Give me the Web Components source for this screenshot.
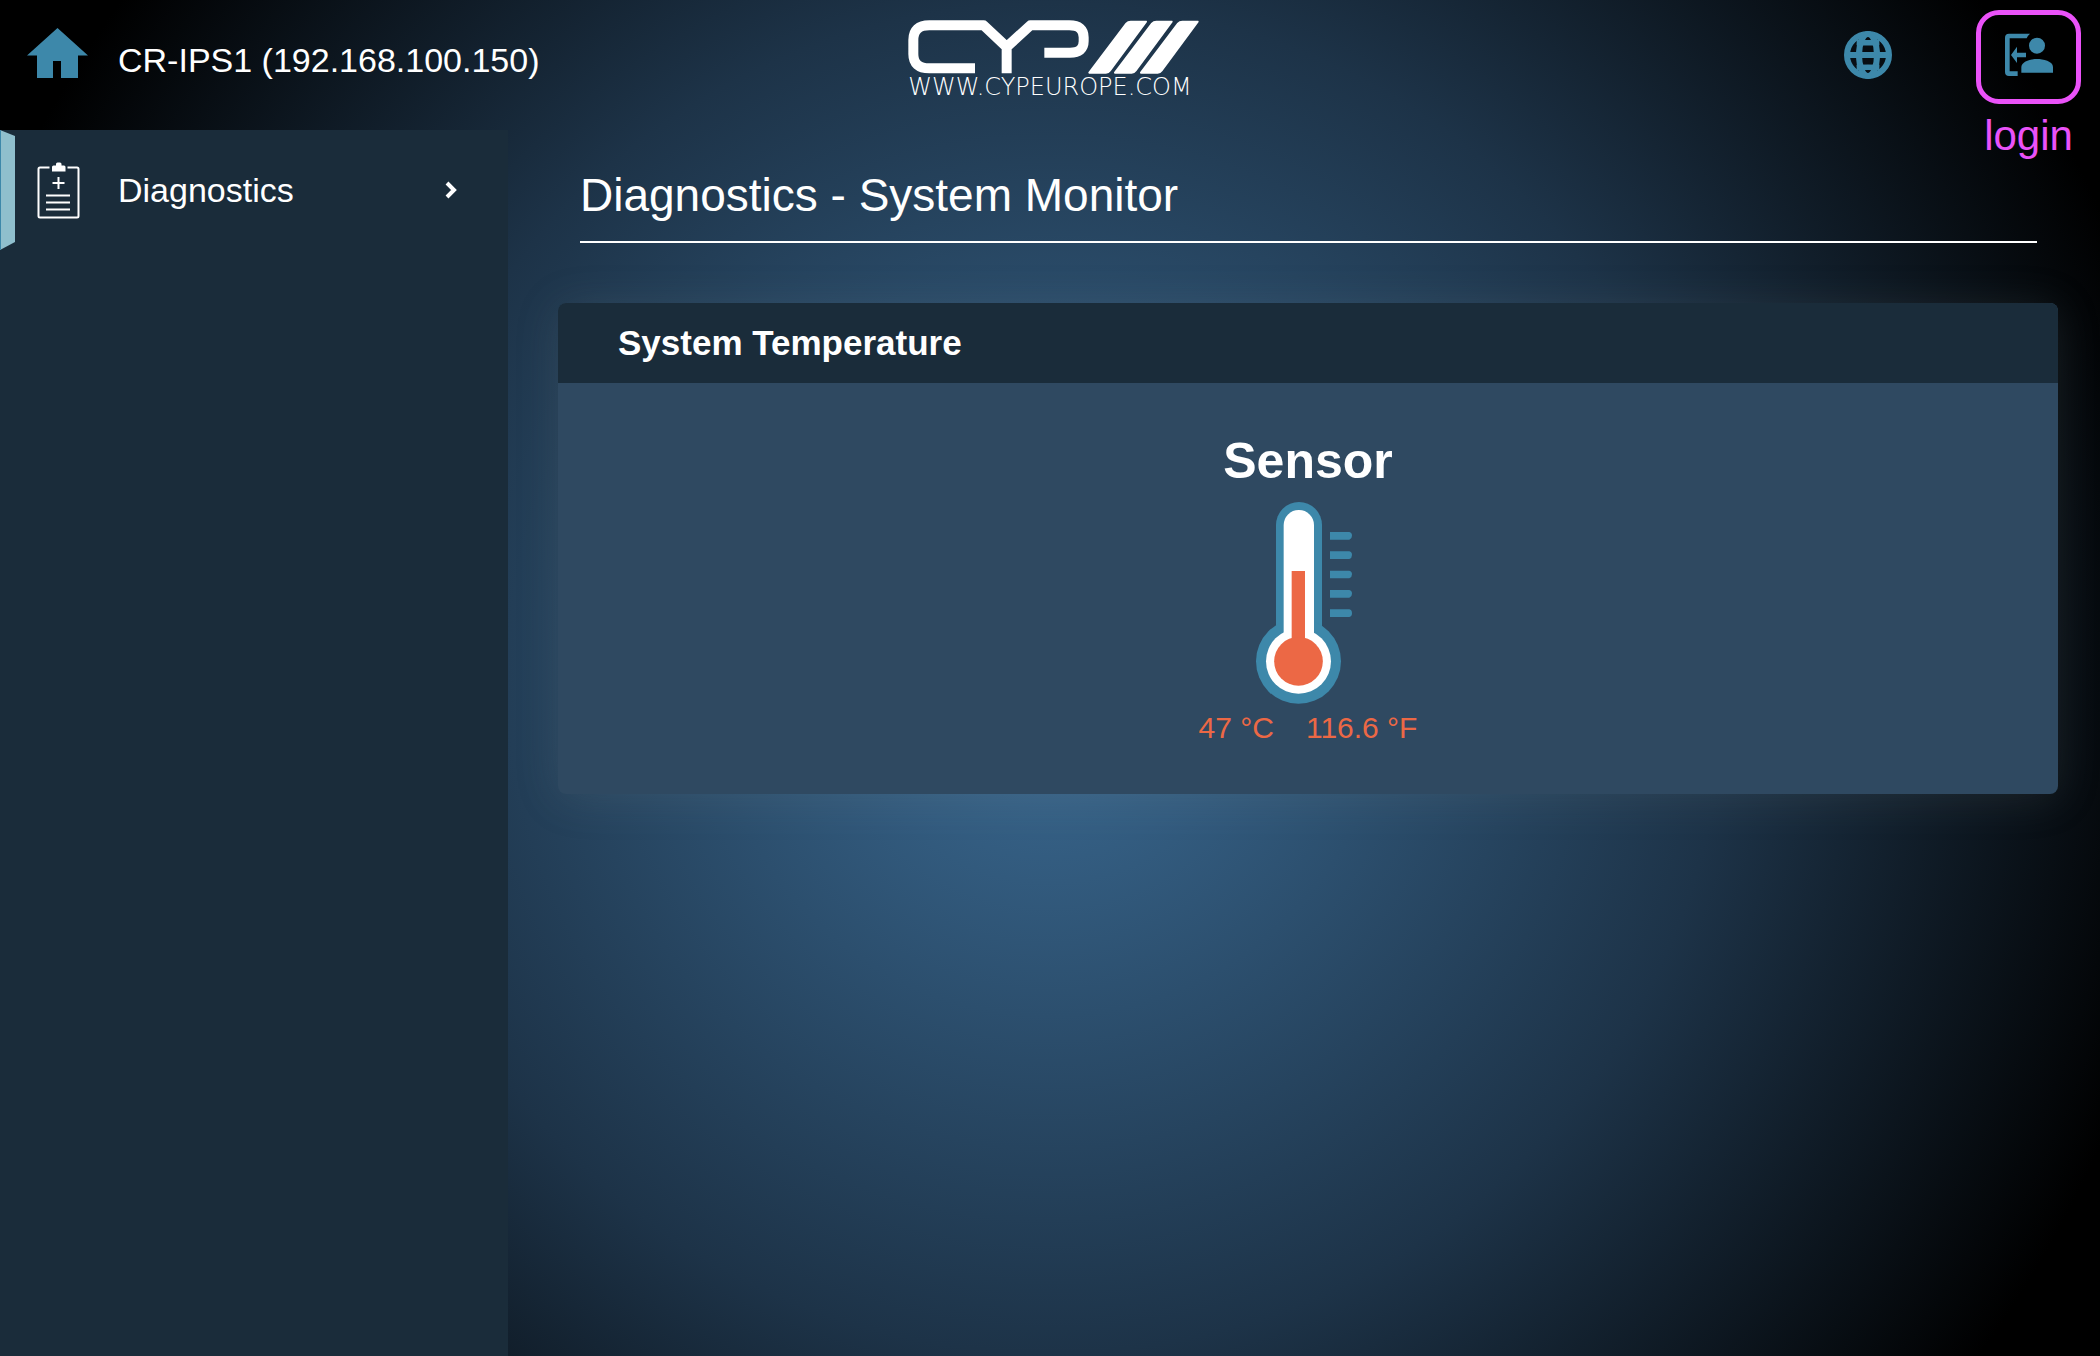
<!DOCTYPE html>
<html lang="en">
<head>
<meta charset="utf-8">
<meta name="viewport" content="width=device-width, initial-scale=1">
<title>CR-IPS1 - System Monitor</title>
<style>
  html, body { margin: 0; height: 100%; }
  body {
    --accent: #3d88aa;
    --panel: #1a2c3a;
    --surface: #2f4961;
    --hot: #ec6845;
    --mark: #ea52f8;
    font-family: "Liberation Sans", Arial, sans-serif;
    font-size: 34px;
    color: #fff;
  }
</style>
</head>
<body>
<app-shell>
  <app-header slot="header" device="CR-IPS1 (192.168.100.150)"></app-header>
  <side-nav slot="nav"><nav-item href="#diagnostics">Diagnostics</nav-item></side-nav>
  <page-title>Diagnostics - System Monitor</page-title>
  <info-card>
    <span slot="heading">System Temperature</span>
    <temp-sensor celsius="47" fahrenheit="116.6">Sensor</temp-sensor>
  </info-card>
</app-shell>

<script>
  const define = (name, html) => customElements.define(name, class extends HTMLElement {
    constructor() {
      super();
      const t = document.createElement('template');
      t.innerHTML = html;
      this.attachShadow({ mode: 'open' }).append(t.content.cloneNode(true));
    }
    connectedCallback() {
      this.shadowRoot.querySelectorAll('[data-attr]').forEach(n => {
        n.textContent = this.getAttribute(n.dataset.attr);
      });
      const link = this.shadowRoot.querySelector('a[data-link]');
      if (link) link.href = this.getAttribute('href');
    }
  });

  define('app-shell', `
    <style>
      :host { display: flex; flex-direction: column; min-height: 100vh;
        background: radial-gradient(circle at center, #3b6b94 0%, #1d3348 54%, #000 92%); }
      .body { flex: 1; display: flex; }
      main { flex: 1; min-width: 0; padding: 39px 42px 60px 50px; box-sizing: border-box; }
    </style>
    <slot name="header"></slot>
    <div class="body"><slot name="nav"></slot><main><slot></slot></main></div>`);

  define('app-header', `
    <style>
      :host { display: block; }
      header { display: grid; grid-template-columns: 1fr auto 1fr; height: 130px; }
      svg { display: block; }
      .brand { display: flex; align-items: flex-end; gap: 30px; height: 50px; padding: 28px 0 0 27px; line-height: 36px; white-space: nowrap; }
      .actions { display: flex; justify-content: flex-end; align-items: flex-start; gap: 84px; padding: 10px 19px 0 0; }
      button { margin: 0; padding: 0; border: 0; background: none; font: inherit; color: inherit; cursor: pointer; }
      .lang { padding-top: 21px; }
    </style>
    <header>
      <div class="brand">
        <a href="#home" aria-label="Home"><svg width="61" height="50" viewBox="27 28 61 50" fill="var(--accent)"><path d="M57.5 28 88 55.5H78V78H61V61H53V78H37V55.5H27Z"/></svg></a>
        <span data-attr="device"></span>
      </div>
      <cyp-logo></cyp-logo>
      <div class="actions">
        <button class="lang" aria-label="Language"><svg width="48" height="48" viewBox="132 93 144 144" fill="none" stroke="var(--accent)">
          <circle cx="204" cy="165" r="63" stroke-width="18"/>
          <ellipse cx="204" cy="165" rx="27" ry="63" stroke-width="18"/>
          <path stroke-width="18" d="M140 165H268"/>
          <path stroke-width="17" d="M170 127.500Q204 129 238 127.500M170 202.500Q204 201 238 202.500"/>
        </svg></button>
        <login-button>login</login-button>
      </div>
    </header>`);

  define('cyp-logo', `
    <style>
      :host { display: flex; flex-direction: column; align-items: center; padding-top: 20px; }
      svg { display: block; }
      span { font-family: "DejaVu Sans", sans-serif; font-weight: 200; font-size: 24px; line-height: 24px; padding-top: 1px; }
    </style>
    <svg width="300" height="54" viewBox="30 60 900 162" role="img" aria-label="CYP" fill="none" stroke="#fff" stroke-width="30" stroke-linejoin="round">
      <path d="M255 205H118Q70 205 70 162V120Q70 76 118 76H281L350 141L421 76H538Q581 76 581 112V124Q581 158 540 158H463M350 142V220"/>
      <g fill="#fff" stroke-width="6"><path d="M598 218H648Q655 218 660 211L768 65H722Q714 65 709 71Z"/><path d="M675 218H725Q732 218 737 211L845 65H799Q791 65 786 71Z"/><path d="M753 218H803Q810 218 815 211L923 65H877Q869 65 864 71Z"/></g>
    </svg>
    <span>WWW.CYPEUROPE.COM</span>`);

  define('login-button', `
    <style>
      :host { display: block; }
      button { display: flex; flex-direction: column; align-items: center; gap: 9px; margin: 0; padding: 0; border: 0; background: none; cursor: pointer; color: var(--mark); font-family: inherit; font-size: 42px; line-height: 46px; }
      .box { display: flex; align-items: center; justify-content: center; width: 105px; height: 94px; box-sizing: border-box; border: 5px solid var(--mark); border-radius: 23px; padding-bottom: 4px; }
      svg { display: block; }
    </style>
    <button>
      <span class="box"><svg width="48" height="44" viewBox="612 99 144 132" fill="var(--accent)">
        <path d="M624 101H687Q680 107 677 115H626V214H650V228H624Q612 228 612 216V113Q612 101 624 101Z"/>
        <path d="M630 165 648 140V158H675V172H648V189Z"/>
        <circle cx="708" cy="137" r="24"/>
        <path d="M661 218V201C661 184 690 177 708 177S756 184 756 201V218Z"/>
      </svg></span>
      <span><slot></slot></span>
    </button>`);

  define('side-nav', `
    <style>:host { display: block; flex: 0 0 508px; background: var(--panel); }</style>
    <nav><slot></slot></nav>`);

  define('nav-item', `
    <style>
      :host { display: block; }
      a { display: flex; align-items: center; height: 120px; color: inherit; text-decoration: none; padding-right: 50px; }
      .tab { align-self: stretch; width: 15px; box-sizing: border-box; background: #8fbfcd; border-left: 1px solid var(--accent); clip-path: polygon(0 0, 100% 6px, 100% 112px, 0 100%); }
      .icon { margin: 0 38px 0 22px; }
      .label { flex: 1; }
      svg { display: block; }
    </style>
    <a data-link>
      <span class="tab"></span>
      <svg class="icon" width="43" height="58" viewBox="37 161 43 58" fill="none" stroke="#fff" stroke-width="2">
        <path d="M49.500 167.500H40Q38.500 167.500 38.500 169V216Q38.500 217.500 40 217.500H77Q78.500 217.500 78.500 216V169Q78.500 167.500 77 167.500H67.500"/>
        <path fill="#fff" stroke="none" d="M52 167Q52 165.500 53.500 165.500H56V164Q56 162.500 57.500 162.500H60Q61.500 162.500 61.500 164V165.500H64Q65.500 165.500 65.500 167V171.500H52Z"/>
        <path d="M58.500 177V189M52.500 183H64.500M46 195.500H70M46 202.500H70M46 209.500H70"/>
      </svg>
      <span class="label"><slot></slot></span>
      <svg width="13" height="18" viewBox="0 0 13 18" fill="none" stroke="#fff" stroke-width="4"><path d="M2 2 9 9 2 16"/></svg>
    </a>`);

  define('page-title', `
    <style>
      :host { display: block; margin: 0 21px 60px 22px; border-bottom: 2px solid #fff; }
      h1 { margin: 0; padding-bottom: 20px; font-size: 46px; line-height: 52px; font-weight: 400; }
    </style>
    <h1><slot></slot></h1>`);

  define('info-card', `
    <style>
      :host { display: block; border-radius: 8px; overflow: hidden; background: var(--surface); box-shadow: 0 4px 44px rgba(120, 128, 128, .17); }
      h2 { margin: 0; padding: 22px 60px; font-size: 35px; line-height: 36px; font-weight: 700; background: var(--panel); }
      .content { padding: 50px 60px; }
    </style>
    <section><h2><slot name="heading"></slot></h2><div class="content"><slot></slot></div></section>`);

  define('temp-sensor', `
    <style>
      :host { display: flex; flex-direction: column; align-items: center; }
      h3 { margin: 0; font-size: 50px; line-height: 56px; font-weight: 700; }
      svg { display: block; margin: 13px 0 8px; }
      .readings { display: flex; gap: 32px; font-size: 30px; line-height: 32px; color: var(--hot); }
    </style>
    <h3><slot></slot></h3>
    <svg width="104" height="202" viewBox="318 246 312 606" aria-hidden="true">
      <g fill="var(--accent)">
        <rect x="378" y="246" width="138" height="500" rx="69"/><circle cx="445.500" cy="724" r="127.500"/>
        <path d="M540 336H598Q606 338 606 347T598 359H540ZM540 394H598Q606 396 606 405T598 417H540ZM540 452H598Q606 454 606 463T598 475H540ZM540 510H598Q606 512 606 521T598 533H540ZM540 568H598Q606 570 606 580T598 591H540Z"/>
      </g>
      <g fill="#fff"><rect x="401" y="270" width="91" height="440" rx="45"/><circle cx="445.500" cy="724" r="97.500"/></g>
      <g fill="var(--hot)"><rect x="425" y="453" width="40" height="240"/><circle cx="445.500" cy="724" r="73"/></g>
    </svg>
    <div class="readings"><span><span data-attr="celsius"></span> °C</span><span><span data-attr="fahrenheit"></span> °F</span></div>`);
</script>
</body>
</html>
